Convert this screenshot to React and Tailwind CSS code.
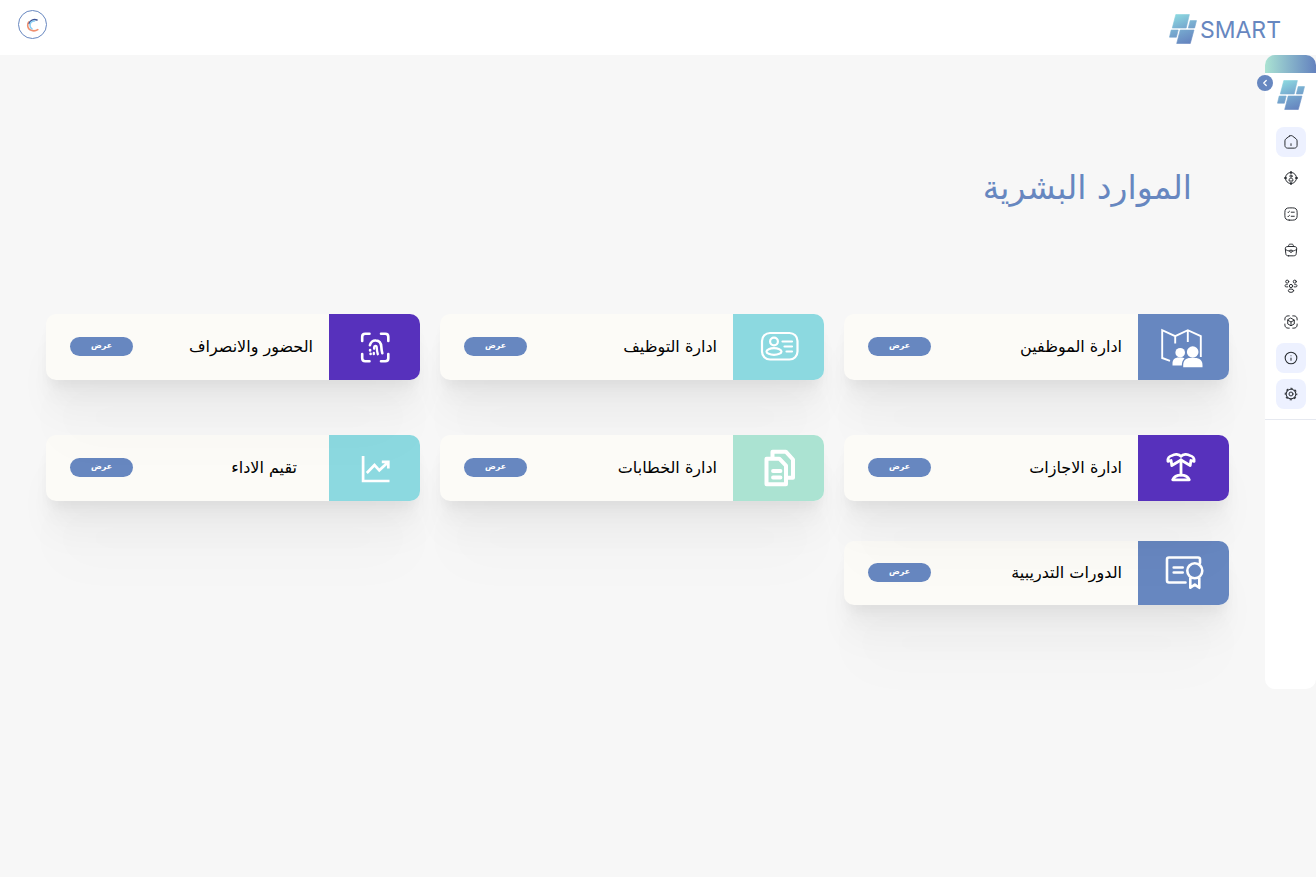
import React from "react";
import { ChevronLeft, Info } from "lucide-react";

const LogoMark = ({ id, className }) => (
  <svg viewBox="0 0 28 30" className={className} aria-hidden="true">
    <defs>
      <linearGradient id={id} x1="8" y1="0" x2="20" y2="30" gradientUnits="userSpaceOnUse">
        <stop offset="0" stopColor="#8cd9e0" />
        <stop offset="0.45" stopColor="#78acd0" />
        <stop offset="1" stopColor="#6482be" />
      </linearGradient>
    </defs>
    <g fill={`url(#${id})`} stroke={`url(#${id})`} strokeWidth="0.6" strokeLinejoin="round">
      <path d="M6.8 .5H20.400L17.200 14H3.300Z" />
      <path d="M21.200 6.600H27.500L25.600 14H19.300Z" />
      <path d="M2.200 16H9.200L7.400 23.200H.5Z" />
      <path d="M11.200 16H25L21.300 29.500H7.700Z" />
    </g>
  </svg>
);

const Line = ({ children }) => (
  <svg
    viewBox="0 0 24 24"
    className="size-3.5"
    fill="none"
    stroke="currentColor"
    strokeWidth="1.7"
    strokeLinecap="round"
    strokeLinejoin="round"
    aria-hidden="true"
  >
    {children}
  </svg>
);

const NAV = [
  {
    label: "الرئيسية",
    tinted: true,
    icon: (
      <Line>
        <path d="M9.300 1.900 3.200 6.600C2.300 7.300 1.600 8.800 1.600 10v8C1.600 20.500 3.600 22.500 6.100 22.500h11.800c2.500 0 4.500-2 4.500-4.500V10c0-1.200-.7-2.600-1.600-3.400l-6.100-4.700c-1.600-1.200-3.800-1.200-5.400 0Z" />
        <path d="M12 18v-3" />
      </Line>
    ),
  },
  {
    label: "المستخدمون",
    icon: (
      <Line>
        <circle cx="12" cy="12" r="9.500" />
        <path d="M12 .8v3.400M12 19.800v3.400M.8 12h3.400M19.800 12h3.400" strokeWidth="2.400" />
        <circle cx="12" cy="8.800" r="1.900" />
        <path d="M8.800 16.500v-1.700c0-1.300 1-2.300 2.300-2.300h1.800c1.300 0 2.300 1 2.300 2.300v1.700Z" />
      </Line>
    ),
  },
  {
    label: "المهام",
    icon: (
      <Line>
        <path d="M12.400 8.900h5.200M6.400 8.900l.7.7 2.300-2.200M12.400 15.900h5.200M6.400 15.900l.7.7 2.300-2.200" />
        <path d="M9 22.500h6c5.200 0 7.500-2.300 7.500-7.500V9c0-5.200-2.300-7.500-7.500-7.500H9C3.800 1.500 1.500 3.800 1.500 9v6c0 5.200 2.300 7.500 7.500 7.500Z" />
      </Line>
    ),
  },
  {
    label: "الأعمال",
    icon: (
      <Line>
        <path d="M8 22h8c4 0 4.700-1.600 4.900-3.600l.8-8C22 8 21.300 6 17 6H7C2.700 6 2 8 2.300 10.400l.8 8C3.300 20.400 4 22 8 22Z" />
        <path d="M8 6v-.8C8 3.400 8 2 11.200 2h1.600C16 2 16 3.400 16 5.200V6" />
        <path d="M14 13v1c0 1.200 0 2-2 2s-2-.8-2-2v-1ZM21.600 11c-2.300 1.700-4.900 2.700-7.600 3M2.600 11.300c2.300 1.500 4.800 2.400 7.400 2.700" />
      </Line>
    ),
  },
  {
    label: "الفريق",
    icon: (
      <Line>
        <circle cx="5.500" cy="4.500" r="2.600" />
        <circle cx="18.500" cy="4.500" r="2.600" />
        <circle cx="12" cy="12" r="2.800" />
        <ellipse cx="12" cy="20" rx="4.600" ry="2.900" />
        <path d="M6.500 13.500C3.500 14 1.500 13 1.500 11.700c0-1.300 1.500-2.200 4-2.200M17.500 13.500c3 .5 5-.5 5-1.800 0-1.300-1.500-2.200-4-2.200" />
      </Line>
    ),
  },
  {
    label: "المخزون",
    icon: (
      <Line>
        <path d="M1.500 8.500V7c0-3.300 2.200-5.500 5.500-5.500h2M15 1.500h2c3.300 0 5.500 2.200 5.500 5.500v1.500M22.500 15.500V17c0 3.300-2.200 5.500-5.500 5.500h-2M9 22.500H7c-3.300 0-5.500-2.200-5.500-5.500v-1.500" />
        <path d="m12 5.500 5.600 3.200v6.600L12 18.500l-5.600-3.200V8.700ZM6.700 9l5.300 3 5.300-3M12 12v6" />
      </Line>
    ),
  },
  {
    label: "معلومات",
    tinted: true,
    icon: <Info className="size-3.5" strokeWidth={1.8} aria-hidden="true" />,
  },
  {
    label: "الإعدادات",
    tinted: true,
    icon: (
      <Line>
        <circle cx="12" cy="12" r="3.400" />
        <circle cx="12" cy="12" r="8.300" strokeWidth="1.800" />
        <circle
          cx="12"
          cy="12"
          r="9.900"
          strokeWidth="1.800"
          strokeLinecap="butt"
          pathLength="80"
          strokeDasharray="5 5"
          strokeDashoffset="2.500"
        />
      </Line>
    ),
  },
];

const Glyph = ({ w, box = "0 0 44 42", children }) => (
  <svg
    viewBox={box}
    className="h-[42px] w-11 overflow-visible"
    fill="none"
    stroke="#fff"
    strokeWidth={w}
    aria-hidden="true"
  >
    {children}
  </svg>
);

const MapPeople = () => (
  <Glyph w="1.900" box="2.500 -1 44 42">
    <path d="M10.500 33.800 2.700 31V3.200l13 6 12.600-6 13 6V30M15.700 9v7.500M28.300 3v12" />
    <circle cx="20.700" cy="25.700" r="4.800" fill="#fff" stroke="none" />
    <path d="M13 38.500v-2c0-4 2.500-6 6-6h2.500c1.500 0 2.700.3 3.500 1-1.600 1.500-2.700 3.600-2.700 7Z" fill="#fff" stroke="none" />
    <circle cx="33.200" cy="25" r="5.800" fill="#fff" stroke="none" />
    <path d="M23.700 40.300v-2.300c0-4.500 2.800-7 7-7h5c4.200 0 7.300 2.500 7.300 7v2.300Z" fill="#fff" stroke="none" />
  </Glyph>
);

const IdCard = () => (
  <Glyph w="2.200" box="0 -1 44 42">
    <rect x="5" y="6" width="35.500" height="26.500" rx="8" />
    <circle cx="17" cy="14.500" r="3.900" />
    <ellipse cx="17" cy="24.500" rx="7.500" ry="3.300" />
    <path d="M25.500 14.500h9.500M27.500 19.500H35M29.500 24.500H35" strokeLinecap="round" />
  </Glyph>
);

const Documents = () => (
  <Glyph w="4">
    <path d="M9.500 11.700h12.800l6.700 7v18.500H9.500Z" strokeLinejoin="round" />
    <path d="M15.500 10.500V4.700h13.300l7.200 7.800v18.300h-5" strokeLinejoin="round" />
    <path d="M16 24h7.500M16 30.500h7.500" strokeWidth="3.800" strokeLinecap="round" />
  </Glyph>
);

const Fingerprint = () => (
  <Glyph w="2.600" box="-0.500 -1 44 42">
    <g strokeLinecap="round">
      <path d="M8.700 14V9.700c0-2 1-3 3-3h4.300M27.500 6.700h4.300c2 0 3 1 3 3V14M34.800 27v4.300c0 2-1 3-3 3h-4.300M16 34.300h-4.300c-2 0-3-1-3-3V27" />
      <path d="M16.400 18.300c.6-3 3-5.100 6-4.800 3.500.2 5.200 2.800 5.400 6.200.1 2.600.5 4.600 1 6.600" />
      <path d="M24.300 27.200c-.8-2.700-1-4.700-1.100-7.200-.2-1.600-2.500-1.500-2.600.2v1.600M20.300 26v1.200" strokeWidth="2.300" />
      <path d="M16.600 23v.4M17.100 26.700v.3" />
    </g>
  </Glyph>
);

const Chart = () => (
  <Glyph w="2.700" box="-0.500 -0.500 44 42">
    <path d="M9.600 8.500v25h26.400" />
    <path d="m13.300 25.500 7.700-8 4.800 5.300 9-8.400M28.300 14.300h6.500v6.800" />
  </Glyph>
);

const Palm = () => (
  <Glyph w="2.800" box="3 0 44 42">
    <g strokeLinejoin="round" strokeLinecap="round">
      <path d="M22 9.300c-2-2.400-6.500-2.600-8.800-.8-3 .6-4.800 3.200-4.300 5.800l3.200-.8.700 5L22 13l9.200 5.500.7-5 3.200.8c.5-2.600-1.300-5.200-4.300-5.800-2.300-1.800-6.800-1.600-8.800.8Z" />
      <path d="M22 13V28" />
      <path d="M13.700 32.800c1.500-3.400 4.800-4.600 8.300-4.600s6.800 1.200 8.300 4.600Z" />
    </g>
  </Glyph>
);

const Certificate = () => (
  <Glyph w="2.600" box="1.500 2 44 42">
    <path d="M25 32.500H8.500c-1.200 0-2-.8-2-2V9.500c0-1.200.8-2 2-2h29c1.200 0 2 .8 2 2v3.500" strokeLinecap="round" />
    <path d="M13.200 17.500h9M13.200 22.500h9" strokeLinecap="round" />
    <path d="M29.800 27.500v10.300l4.500-3.200 4.500 3.200v-10.300" strokeLinejoin="round" />
    <circle cx="34.300" cy="20.800" r="7.500" fill="#6787c0" />
  </Glyph>
);

const CARDS = [
  { title: "ادارة الموظفين", Icon: MapPeople, tile: "bg-[#6787c0]", inset: "ps-4", height: "h-[66px]", layer: "z-20" },
  { title: "ادارة التوظيف", Icon: IdCard, tile: "bg-[#8cd9e0]", inset: "ps-4", height: "h-[66px]", layer: "z-10" },
  { title: "الحضور والانصراف", Icon: Fingerprint, tile: "bg-[#5731bc]", inset: "ps-4", height: "h-[66px]", layer: "z-20" },
  { title: "ادارة الاجازات", Icon: Palm, tile: "bg-[#5731bc]", inset: "ps-4", height: "h-[66px]", layer: "z-20" },
  { title: "ادارة الخطابات", Icon: Documents, tile: "bg-[#abe3d2]", inset: "ps-4", height: "h-[66px]", layer: "z-10" },
  { title: "تقيم الاداء", Icon: Chart, tile: "bg-[#8cd9e0]", inset: "ps-8", height: "h-[66px]", layer: "z-10" },
  { title: "الدورات التدريبية", Icon: Certificate, tile: "bg-[#6787c0]", inset: "ps-4", height: "h-16", layer: "z-10" },
];

function Card({ title, Icon, tile, inset, height, layer }) {
  return (
    <article
      className={`relative flex rounded-[10px] bg-[#fcfbf7] shadow-[0_70px_56px_-8px_rgba(0,0,0,0.02),0_36px_36px_-4px_rgba(0,0,0,0.04),0_18px_20px_-3px_rgba(0,0,0,0.03),0_8px_10px_-2px_rgba(0,0,0,0.035)] ${height} ${layer}`}
    >
      <div className={`flex w-[91px] shrink-0 items-center justify-center rounded-s-[10px] ${tile}`}>
        <Icon />
      </div>
      <div className={`flex grow items-center justify-between pe-6 pb-px ${inset}`}>
        <h2 className="text-base leading-6 whitespace-nowrap text-black">{title}</h2>
        <button
          type="button"
          className="flex h-[19px] w-[63px] items-center justify-center rounded-full bg-[#6787c0] pb-0.5 text-[8px] leading-4 font-bold text-white"
        >
          عرض
        </button>
      </div>
    </article>
  );
}

export default function App() {
  return (
    <div dir="rtl" className="min-h-screen bg-[#f7f7f7] font-['DejaVu_Sans',sans-serif]">
      <header className="flex h-[55px] items-center justify-between bg-white ps-[35px] pe-[18px]">
        <a href="#" dir="ltr" className="flex items-center gap-[3px] pt-0.5" aria-label="SMART">
          <LogoMark id="mark-header" className="h-[30px] w-7" />
          <span className="pt-0.5 font-[Inter,sans-serif] text-[23px] leading-7 text-[#6787c0]">SMART</span>
        </a>
        <button
          type="button"
          aria-label="الحساب"
          className="mb-1.5 flex size-[29px] items-center justify-center rounded-full border border-[#6787c0]"
        >
          <svg viewBox="0 0 14 14" className="size-3.5" fill="none" strokeLinecap="round" aria-hidden="true">
            <path d="M11.800 11.600C8 14.200 1.700 12.500 1.700 7.200c0-1.200.4-2.300 1-3.200" stroke="#f08f6e" strokeWidth="1.600" />
            <path d="M3.200 5.500C4 2.500 7.500.8 11 2" stroke="#3f5596" strokeWidth="1.500" />
            <path d="M8.500 3C5.500 3.300 4 5 4 7.200c0 1.700.8 3 2 3.700" stroke="#8acdf2" strokeWidth="1.600" />
          </svg>
        </button>
      </header>

      <div className="flex items-start">
        <aside className="relative min-h-[634px] w-[51px] shrink-0 rounded-[10px] bg-white">
          <div className="h-[18px] rounded-t-[10px] bg-linear-to-r from-[#abe3d2] to-[#6482be]" />
          <button
            type="button"
            aria-label="توسيع القائمة"
            className="absolute top-5 -left-2 flex size-4 items-center justify-center rounded-full bg-[#6787c0] text-white"
          >
            <ChevronLeft className="size-2.5" strokeWidth={3} aria-hidden="true" />
          </button>
          <LogoMark id="mark-side" className="mx-auto mt-[7px] h-[30px] w-7" />
          <nav className="mt-[17px] flex flex-col items-center gap-1.5 border-b border-[#e6e9f0] pb-[10px]">
            {NAV.map((n) => (
              <a
                key={n.label}
                href="#"
                aria-label={n.label}
                className={`flex size-[30px] items-center justify-center rounded-lg text-[#292d32] ${n.tinted ? "bg-[#edf1ff]" : ""}`}
              >
                {n.icon}
              </a>
            ))}
          </nav>
        </aside>

        <main className="min-w-0 grow ps-9 pe-[46px] pt-[105px] pb-32">
          <h1 className="ps-[37px] text-[33px] leading-[56px] text-[#6787c0]">الموارد البشرية</h1>
          <section className="mt-[98px] grid grid-cols-[385fr_384fr_374fr] grid-rows-[81px_66px_64px] items-start gap-x-5 gap-y-10">
            {CARDS.map((c) => (
              <Card key={c.title} {...c} />
            ))}
          </section>
        </main>
      </div>
    </div>
  );
}
